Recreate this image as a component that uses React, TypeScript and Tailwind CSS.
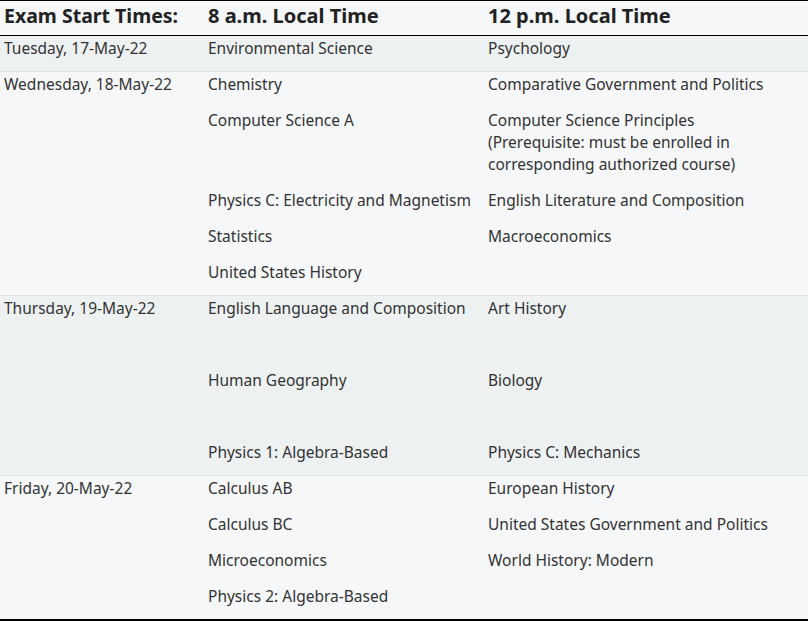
import React from "react";

type Row = { left: string[]; right: string[]; h?: string };
type Group = { date: string; bg: string; rows: Row[] };

const groups: Group[] = [
  { date: "Tuesday, 17-May-22", bg: "bg-[#eef1f2]", rows: [{ left: ["Environmental Science"], right: ["Psychology"] }] },
  {
    date: "Wednesday, 18-May-22",
    bg: "bg-[#f6f7f9]",
    rows: [
      { left: ["Chemistry"], right: ["Comparative Government and Politics"] },
      {
        left: ["Computer Science A"],
        right: ["Computer Science Principles", "(Prerequisite: must be enrolled in", "corresponding authorized course)"],
      },
      { left: ["Physics C: Electricity and Magnetism"], right: ["English Literature and Composition"] },
      { left: ["Statistics"], right: ["Macroeconomics"] },
      { left: ["United States History"], right: [] },
    ],
  },
  {
    date: "Thursday, 19-May-22",
    bg: "bg-[#eef1f2]",
    rows: [
      { left: ["English Language and Composition"], right: ["Art History"], h: "h-[72px]" },
      { left: ["Human Geography"], right: ["Biology"], h: "h-[72px]" },
      { left: ["Physics 1: Algebra-Based"], right: ["Physics C: Mechanics"] },
    ],
  },
  {
    date: "Friday, 20-May-22",
    bg: "bg-[#f6f7f9]",
    rows: [
      { left: ["Calculus AB"], right: ["European History"] },
      { left: ["Calculus BC"], right: ["United States Government and Politics"] },
      { left: ["Microeconomics"], right: ["World History: Modern"] },
      { left: ["Physics 2: Algebra-Based"], right: [] },
    ],
  },
];

function Cell({ lines, h, last }: { lines: string[]; h?: string; last: boolean }) {
  return (
    <div className={`pl-1 pr-1 pt-px ${h ?? ""} ${last ? "pb-[12px]" : "pb-[13px]"}`}>
      {lines.length > 0 && (
        <p className="leading-[22px]">
          {lines.map((l, i) => (
            <React.Fragment key={i}>
              {l}
              {i < lines.length - 1 && <br />}
            </React.Fragment>
          ))}
        </p>
      )}
    </div>
  );
}

export default function App() {
  return (
    <div
      className="w-[808px] h-[621px] overflow-hidden bg-[#f6f7f9] text-[#333333] text-[15.5px]"
      style={{ fontFamily: '"Noto Sans", "Open Sans", sans-serif' }}
    >
      <div className="grid grid-cols-[204px_280px_1fr] border-t border-black border-b border-b-black h-[36px] items-center pb-[7px] bg-[#f6f7f9] text-[20px] font-bold text-[#222222]">
        <div className="pl-1 text-[19.5px]">Exam Start Times:</div>
        <div className="pl-1">8 a.m. Local Time</div>
        <div className="pl-1">12 p.m. Local Time</div>
      </div>
      {groups.map((g, gi) => (
        <div
          key={gi}
          className={`grid grid-cols-[204px_280px_1fr] ${g.bg} ${gi > 0 ? "border-t border-[#dee2e6]" : ""} ${gi === groups.length - 1 ? "border-b-2 border-b-black" : ""}`}
        >
          {g.rows.map((r, ri) => {
            const last = ri === g.rows.length - 1;
            return (
              <React.Fragment key={ri}>
                <Cell lines={ri === 0 ? [g.date] : []} h={r.h} last={last} />
                <Cell lines={r.left} h={r.h} last={last} />
                <Cell lines={r.right} h={r.h} last={last} />
              </React.Fragment>
            );
          })}
        </div>
      ))}
    </div>
  );
}
